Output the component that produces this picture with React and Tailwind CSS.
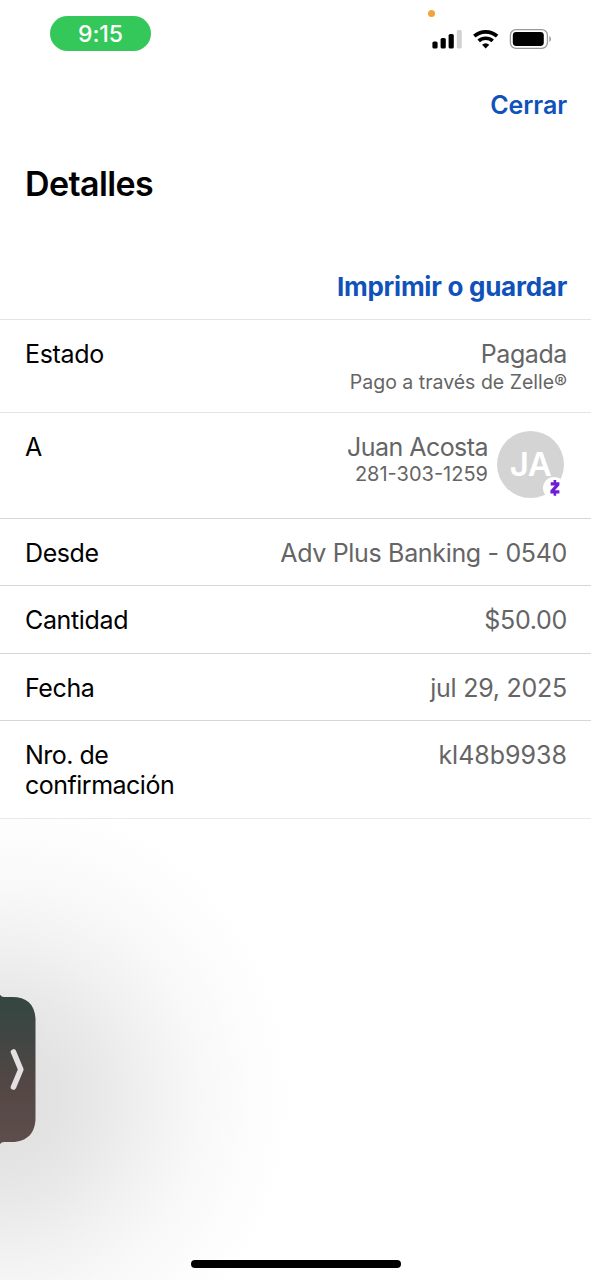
const FONT = "Inter, 'Liberation Sans', sans-serif"

const ROWS = [
  { id: 'from', label: 'Desde', value: 'Adv Plus Banking - 0540', height: 'h-[67px]', labelSpacing: 'tracking-[-0.4px]', spacing: 'tracking-[-0.33px]' },
  { id: 'amount', label: 'Cantidad', value: '$50.00', height: 'h-[68px]', labelSpacing: 'tracking-[-0.35px]', spacing: 'tracking-[-0.3px]' },
  { id: 'date', label: 'Fecha', value: 'jul 29, 2025', height: 'h-[67px]', labelSpacing: 'tracking-[-0.4px]', spacing: 'tracking-[-0.25px]' },
  { id: 'confirmation', label: 'Nro. de confirmación', value: 'kl48b9938', height: 'h-[98px]', labelSpacing: 'tracking-[-0.5px]', spacing: 'tracking-[0px]' },
]

function StatusBar() {
  return (
    <div className="relative flex h-[68px] items-start justify-between pl-[50px] pr-[38px]">
      <div className="mt-4 flex h-[35px] w-[101px] items-center justify-center rounded-full bg-[#34c759] text-[23px] font-medium tracking-[-0.1px] text-white">
        9:15
      </div>

      {/* microphone in use */}
      <span className="absolute left-[428px] top-[10px] h-[7px] w-[7px] rounded-full bg-[#f2a33c]" aria-hidden />

      <svg className="mt-7" width="121" height="22" viewBox="0 0 121 22" aria-hidden>
        <rect x="0.4" y="13.5" width="5.2" height="7" rx="1.6" />
        <rect x="8.6" y="10" width="5.2" height="10.5" rx="1.6" />
        <rect x="16.6" y="6" width="5.2" height="14.5" rx="1.6" />
        <rect x="24.8" y="2" width="5" height="18.5" rx="1.6" fill="#d2d2d2" />
        <g fill="none" stroke="#000" strokeWidth="3.7">
          <path d="M42.3 8.2A17.2 17.2 0 0 1 65.1 8.2" />
          <path d="M46.7 12.9A10.5 10.5 0 0 1 60.7 12.9" />
        </g>
        <path d="M53.7 20.6L50.1 16.8A5.4 5.4 0 0 1 57.3 16.8Z" />
        <rect x="78.4" y="1.6" width="37" height="18.8" rx="5.6" fill="none" stroke="#999" strokeWidth="1.3" />
        <rect x="80.8" y="4" width="31" height="14" rx="3.4" />
        <path d="M117.3 8.2C119.5 8.6 119.5 13.4 117.3 13.8Z" fill="#999" />
      </svg>
    </div>
  )
}

function Avatar() {
  return (
    <div className="relative -mt-px flex h-[67px] w-[67px] shrink-0 items-center justify-center rounded-full bg-[#d4d4d4] pb-px text-[33px] font-semibold tracking-[-0.5px] text-white">
      JA
      <span className="absolute left-[46px] top-[46px] flex h-[22px] w-[22px] items-center justify-center rounded-full bg-white">
        <svg className="ml-px" width="12" height="18" viewBox="0 0 12 18" aria-hidden>
          <path
            d="M4.6 1H7.2V3.3H10.4V6.2L5.9 11.3H10.4V14.4H7.2V16.8H4.6V14.4H1.4V11.6L5.9 6.4H1.7V3.3H4.6Z"
            fill="#6d1ed4"
          />
        </svg>
      </span>
    </div>
  )
}

/** Drawer handle peeking in from the left edge, with its soft shadow */
function SideHandle() {
  return (
    <div className="relative flex-1 overflow-hidden">
      <div
        className="absolute inset-0 bg-[radial-gradient(ellipse_295px_305px_at_0px_278px,#e0e0e0_0%,#e3e3e3_20%,#e9e9e9_35%,#f1f1f1_51%,#f8f8f8_68%,#fcfcfc_84%,#ffffff_100%)]"
        aria-hidden
      />
      <svg className="absolute left-0 top-[175px]" width="37" height="150" viewBox="0 0 37 150" aria-hidden>
        <defs>
          <linearGradient id="handle" x1="0" y1="0" x2="0" y2="1">
            <stop offset="0" stopColor="#344641" />
            <stop offset="0.3" stopColor="#414643" />
            <stop offset="0.58" stopColor="#524744" />
            <stop offset="1" stopColor="#5e4d4c" />
          </linearGradient>
        </defs>
        <path d="M0 .8Q1.5 3 4 3H12C27 3 35.5 11 35.5 26V124C35.5 139 27 148 12 148H4Q1.5 148 0 150Z" fill="url(#handle)" />
        <path d="M13.5 58L20.8 75.5L13.5 93" fill="none" stroke="#e5dfe1" strokeWidth="5.6" strokeLinecap="round" strokeLinejoin="round" />
      </svg>
      <div className="absolute bottom-3 left-[191px] h-2 w-[210px] rounded-full bg-black" aria-hidden />
    </div>
  )
}

export default function App() {
  return (
    <div className="flex h-[1280px] w-[591px] flex-col overflow-hidden bg-white text-[25px] leading-[30px] text-black" style={{ fontFamily: FONT }}>
      <StatusBar />

      <header className="flex h-[251px] flex-col pl-[25px] pr-[24px]">
        <button type="button" className="mt-[22px] self-end font-semibold tracking-[-0.1px] text-[#0f52ba]">
          Cerrar
        </button>
        <h1 className="mt-[44px] text-[34px] font-semibold leading-[40px] tracking-[-0.6px]">Detalles</h1>
        <button type="button" className="mt-[68px] self-end text-[26px] font-bold tracking-[-0.25px] text-[#0f52ba]">
          Imprimir o guardar
        </button>
      </header>

      <main>
        <div className="flex h-[93px] justify-between border-t border-[#e4e4e4] pl-[25px] pr-[24px] pt-[19px]">
          <span className="tracking-[-0.3px]">Estado</span>
          <div className="flex flex-col items-end text-[#656565]">
            <span className="tracking-[-0.4px]">Pagada</span>
            <span className="text-[19.5px] leading-[27px]">Pago a través de Zelle®</span>
          </div>
        </div>

        <div className="flex h-[106px] justify-between border-t border-[#e4e4e4] pl-[25px] pr-[27px] pt-[19px]">
          <span>A</span>
          <div className="flex gap-[9px] text-[#656565]">
            <div className="flex flex-col items-end">
              <span className="tracking-[-0.55px]">Juan Acosta</span>
              <span className="text-[20px] leading-[24px]">281-303-1259</span>
            </div>
            <Avatar />
          </div>
        </div>

        {ROWS.map((row) => (
          <div key={row.id} className={`flex justify-between border-t border-[#d6d6d6] pl-[25px] pr-[24px] pt-[19px] ${row.height}`}>
            <span className={`w-[170px] ${row.labelSpacing}`}>{row.label}</span>
            <span className={`text-[#656565] ${row.spacing}`}>{row.value}</span>
          </div>
        ))}
        <div className="h-px bg-[#e9e9e9]" />
      </main>

      <SideHandle />
    </div>
  )
}
